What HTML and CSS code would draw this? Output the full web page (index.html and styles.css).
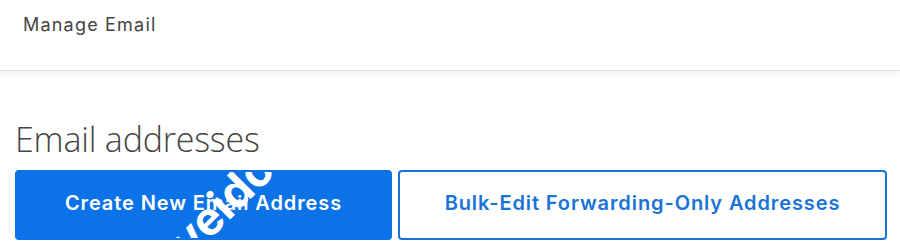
FILE: index.html
```html
<!DOCTYPE html>
<html lang="en">
<head>
<meta charset="utf-8">
<title>Manage Email</title>
<link rel="stylesheet" href="styles.css">
</head>
<body>
<header class="topbar">
  <span class="topbar-title">Manage Email</span>
</header>
<main class="content">
  <h1 class="page-title">Email addresses</h1>
  <div class="actions">
    <button class="btn btn-primary">Create New Email Address<span class="watermark">veidomat</span></button>
    <button class="btn btn-outline">Bulk-Edit Forwarding-Only Addresses</button>
  </div>
</main>
</body>
</html>
```
FILE: styles.css
```css
html, body {
  margin: 0;
  padding: 0;
  background: #ffffff;
  font-family: "Inter", "Liberation Sans", sans-serif;
}
.topbar {
  height: 71px;
  box-sizing: border-box;
  padding: 13px 23px 0;
  background: #ffffff;
  border-bottom: 1px solid #e2e2e2;
  box-shadow: 0 2px 6px rgba(0,0,0,0.08);
}
.topbar-title {
  font-family: "Inter", "Liberation Sans", sans-serif;
  font-size: 18px;
  line-height: 24px;
  letter-spacing: 1.2px;
  color: #444444;
}
.content {
  padding: 0 13px 0 15px;
}
.page-title {
  margin: 45px 0 0;
  font-family: "Open Sans", "Liberation Sans", sans-serif;
  font-weight: 300;
  font-size: 34px;
  line-height: 46px;
  color: #444444;
  letter-spacing: -0.2px;
}
.actions {
  display: grid;
  grid-template-columns: 377px 489px;
  gap: 6px;
  margin-top: 8px;
}
.btn {
  height: 70px;
  padding: 0 0 4px;
  border-radius: 4px;
  font-family: "Inter", "Liberation Sans", sans-serif;
  font-size: 20px;
  font-weight: 600;
  letter-spacing: 0.9px;
  cursor: pointer;
  position: relative;
  overflow: hidden;
}
.btn-primary {
  background: #0b72e7;
  border: 2px solid #0b72e7;
  color: #ffffff;
}
.btn-outline {
  background: #ffffff;
  border: 2px solid #1a73d8;
  color: #1a73d8;
}
.watermark {
  position: absolute;
  left: 177px;
  top: 46px;
  font-size: 46px;
  font-weight: 700;
  letter-spacing: 0;
  color: #ffffff;
  transform: rotate(-45deg);
  transform-origin: left bottom;
  white-space: nowrap;
  line-height: 1;
}
```
